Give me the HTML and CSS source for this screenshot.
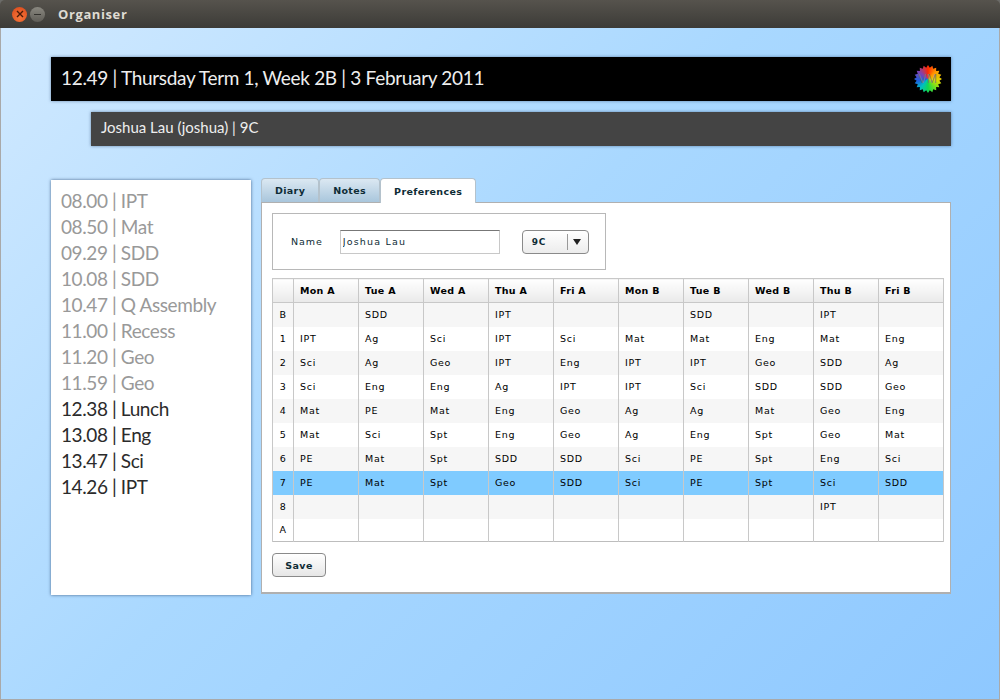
FILE: index.html
```html
<html>
<head>
    <title>Organiser</title>
    <link rel="stylesheet" href="styles.css">
</head>
<body>
    <div id="window">
        <div class="titlebar">
            <div class="winbtn close">
                <svg width="8" height="8" viewBox="0 0 8 8"><path d="M1 1L7 7M7 1L1 7" stroke="#4a1a08" stroke-width="1.4"/></svg>
            </div>
            <div class="winbtn minimise"><span class="dash"></span></div>
            <span class="wintitle">Organiser</span>
        </div>
        <div class="main">
            <div class="clockbar">
                <span>12.49 | Thursday Term 1, Week 2B | 3 February 2011</span>
                <div class="logo"><span>VM</span></div>
            </div>
            <div class="userbar">Joshua Lau (joshua) | 9C</div>
            <div class="content">
                <div class="timeline">
                    <div class="past">08.00 | IPT</div>
                    <div class="past">08.50 | Mat</div>
                    <div class="past">09.29 | SDD</div>
                    <div class="past">10.08 | SDD</div>
                    <div class="past">10.47 | Q Assembly</div>
                    <div class="past">11.00 | Recess</div>
                    <div class="past">11.20 | Geo</div>
                    <div class="past">11.59 | Geo</div>
                    <div>12.38 | Lunch</div>
                    <div>13.08 | Eng</div>
                    <div>13.47 | Sci</div>
                    <div>14.26 | IPT</div>
                </div>
                <div class="tabarea">
                    <div class="tabs">
                        <div class="tab">Diary</div>
                        <div class="tab">Notes</div>
                        <div class="tab active">Preferences</div>
                    </div>
                    <div class="panel">
                        <div class="namebox">
                            <label for="name">Name</label>
                            <input id="name" type="text" value="Joshua Lau">
                            <div class="combo">
                                <span class="combo-value">9C</span>
                                <span class="combo-arrow"></span>
                            </div>
                        </div>
                        <table class="timetable">
                            <thead>
                                <tr><th></th><th>Mon A</th><th>Tue A</th><th>Wed A</th><th>Thu A</th><th>Fri A</th><th>Mon B</th><th>Tue B</th><th>Wed B</th><th>Thu B</th><th>Fri B</th></tr>
                            </thead>
                            <tbody>
                                <tr><td>B</td><td></td><td>SDD</td><td></td><td>IPT</td><td></td><td></td><td>SDD</td><td></td><td>IPT</td><td></td></tr>
                                <tr><td>1</td><td>IPT</td><td>Ag</td><td>Sci</td><td>IPT</td><td>Sci</td><td>Mat</td><td>Mat</td><td>Eng</td><td>Mat</td><td>Eng</td></tr>
                                <tr><td>2</td><td>Sci</td><td>Ag</td><td>Geo</td><td>IPT</td><td>Eng</td><td>IPT</td><td>IPT</td><td>Geo</td><td>SDD</td><td>Ag</td></tr>
                                <tr><td>3</td><td>Sci</td><td>Eng</td><td>Eng</td><td>Ag</td><td>IPT</td><td>IPT</td><td>Sci</td><td>SDD</td><td>SDD</td><td>Geo</td></tr>
                                <tr><td>4</td><td>Mat</td><td>PE</td><td>Mat</td><td>Eng</td><td>Geo</td><td>Ag</td><td>Ag</td><td>Mat</td><td>Geo</td><td>Eng</td></tr>
                                <tr><td>5</td><td>Mat</td><td>Sci</td><td>Spt</td><td>Eng</td><td>Geo</td><td>Ag</td><td>Eng</td><td>Spt</td><td>Geo</td><td>Mat</td></tr>
                                <tr><td>6</td><td>PE</td><td>Mat</td><td>Spt</td><td>SDD</td><td>SDD</td><td>Sci</td><td>PE</td><td>Spt</td><td>Eng</td><td>Sci</td></tr>
                                <tr class="current"><td>7</td><td>PE</td><td>Mat</td><td>Spt</td><td>Geo</td><td>SDD</td><td>Sci</td><td>PE</td><td>Spt</td><td>Sci</td><td>SDD</td></tr>
                                <tr><td>8</td><td></td><td></td><td></td><td></td><td></td><td></td><td></td><td></td><td>IPT</td><td></td></tr>
                                <tr><td>A</td><td></td><td></td><td></td><td></td><td></td><td></td><td></td><td></td><td></td><td></td></tr>
                            </tbody>
                        </table>
                        <button class="save">Save</button>
                    </div>
                </div>
            </div>
        </div>
    </div>
</body>
</html>
```

FILE: styles.css
```css
html, body {
    margin: 0;
    padding: 0;
    width: 1000px;
    height: 700px;
    overflow: hidden;
    background: #6b6b68;
}
#window {
    width: 1000px;
    height: 700px;
    display: flex;
    flex-direction: column;
    border-radius: 5px 5px 0 0;
    overflow: hidden;
}
.titlebar {
    height: 28px;
    flex: none;
    display: flex;
    align-items: center;
    padding-left: 12px;
    box-sizing: border-box;
    background: linear-gradient(#56534d, #3c3b37);
}
.winbtn {
    width: 15px;
    height: 15px;
    border-radius: 50%;
    display: flex;
    align-items: center;
    justify-content: center;
    margin-right: 3px;
}
.close {
    background: radial-gradient(circle at 50% 70%, #f6763a, #d9481a);
}
.minimise {
    background: linear-gradient(#8a8880, #5f5d57);
}
.dash {
    width: 7px;
    height: 1px;
    background: #33322e;
}
.wintitle {
    margin-left: 10px;
    font-family: "Open Sans", sans-serif;
    font-weight: bold;
    font-size: 13px;
    letter-spacing: 0.6px;
    color: #dfdbd2;
}
.main {
    flex: 1;
    box-sizing: border-box;
    padding: 29px 48px 0 50px;
    border: 1px solid #a9a9a9;
    border-width: 0 1px 1px 1px;
    background: linear-gradient(135deg, #d0e9ff 0%, #a9d8ff 45%, #8ec8ff 100%);
}
.clockbar {
    height: 44px;
    box-sizing: border-box;
    background: #000;
    color: #eee;
    display: flex;
    align-items: center;
    justify-content: space-between;
    padding: 0 9px 0 10px;
    font-family: "Lato", sans-serif;
    font-size: 19px;
    letter-spacing: -0.32px;
    box-shadow: 0 0 3px rgba(40, 70, 110, 0.6);
}
.clockbar > span {
    margin-bottom: 4px;
}
.logo {
    width: 28px;
    height: 28px;
    display: flex;
    align-items: center;
    justify-content: center;
    background: conic-gradient(#ff2a00, #ff9500 45deg, #e0d800 100deg, #70e020 140deg, #10d850 180deg, #00c0c0 220deg, #1c60e0 260deg, #8040b0 310deg, #ff2a00);
    clip-path: polygon(50% 0, 56.4% 9.5%, 65.5% 2.4%, 68.6% 13.5%, 79.4% 9.5%, 79% 21%, 90.5% 20.6%, 86.5% 31.4%, 97.6% 34.5%, 90.5% 43.6%, 100% 50%, 90.5% 56.4%, 97.6% 65.5%, 86.5% 68.6%, 90.5% 79.4%, 79% 79%, 79.4% 90.5%, 68.6% 86.5%, 65.5% 97.6%, 56.4% 90.5%, 50% 100%, 43.6% 90.5%, 34.5% 97.6%, 31.4% 86.5%, 20.6% 90.5%, 21% 79%, 9.5% 79.4%, 13.5% 68.6%, 2.4% 65.5%, 9.5% 56.4%, 0 50%, 9.5% 43.6%, 2.4% 34.5%, 13.5% 31.4%, 9.5% 20.6%, 21% 21%, 20.6% 9.5%, 31.4% 13.5%, 34.5% 2.4%, 43.6% 9.5%);
}
.logo span {
    font-family: "Liberation Sans", sans-serif;
    font-size: 12px;
    color: rgba(120, 120, 120, 0.9);
    letter-spacing: 0.5px;
}
.userbar {
    height: 34px;
    line-height: 30px;
    margin: 11px 0 0 40px;
    padding-left: 10px;
    background: #444;
    color: #eee;
    font-family: "Lato", sans-serif;
    font-size: 15px;
    box-shadow: 0 0 3px rgba(40, 70, 110, 0.6);
}
.content {
    display: flex;
    align-items: flex-start;
    margin-top: 34px;
}
.timeline {
    width: 200px;
    height: 415px;
    flex: none;
    box-sizing: border-box;
    background: #fff;
    padding: 8px 0 0 10px;
    font-family: "Lato", sans-serif;
    font-size: 19px;
    letter-spacing: -0.4px;
    line-height: 26px;
    color: #2b2b2b;
    box-shadow: 0 0 3px rgba(40, 70, 110, 0.8);
}
.past {
    color: #999;
}
.tabarea {
    margin: -2px 0 0 10px;
    width: 690px;
    font-family: "DejaVu Sans", sans-serif;
    color: #0e2c36;
}
.tabs {
    display: flex;
    height: 24px;
    align-items: flex-start;
}
.tab {
    height: 24px;
    line-height: 24px;
    box-sizing: border-box;
    padding: 0 13px;
    font-size: 9.5px;
    font-weight: bold;
    letter-spacing: 0.35px;
    border: 1px solid #b4c2cc;
    border-bottom: 0;
    border-radius: 4px 4px 0 0;
    background: linear-gradient(#dbe8f2, #a9c6dc);
}
.tab.active {
    height: 25px;
    line-height: 26px;
    background: #fff;
    position: relative;
}
.panel {
    height: 392px;
    box-sizing: border-box;
    background: #fff;
    border: 1px solid #b0b0b0;
    border-width: 1px 1px 2px 1px;
    padding: 10px 7px 0 10px;
}
.namebox {
    width: 334px;
    height: 57px;
    box-sizing: border-box;
    border: 1px solid #b8b8b8;
    display: flex;
    align-items: center;
    padding-left: 18px;
    font-size: 9.5px;
    letter-spacing: 0.9px;
}
.namebox input {
    width: 160px;
    height: 24px;
    box-sizing: border-box;
    margin: 0 0 0 17px;
    padding: 0 2px;
    border: 1px solid #c8c8c8;
    border-top-color: #777;
    font-family: "DejaVu Sans", sans-serif;
    font-size: 9.5px;
    letter-spacing: 1.2px;
    color: #0e2c36;
    outline: none;
}
.combo {
    margin-left: 22px;
    width: 67px;
    height: 24px;
    box-sizing: border-box;
    border: 1px solid #8a8a8a;
    border-radius: 4px;
    display: flex;
    align-items: center;
    background: linear-gradient(#fff, #ececec);
}
.combo-value {
    width: 45px;
    box-sizing: border-box;
    padding-left: 9px;
    font-weight: bold;
    font-size: 9px;
    border-right: 1px solid #999;
    line-height: 16px;
}
.combo-arrow {
    margin-left: 5px;
    border-left: 4px solid transparent;
    border-right: 4px solid transparent;
    border-top: 6px solid #222;
}
.timetable {
    margin-top: 8px;
    width: 672px;
    table-layout: fixed;
    border-collapse: collapse;
    font-size: 9.5px;
    letter-spacing: 0.7px;
    border: 1px solid #bdbdbd;
}
.timetable th {
    height: 24px;
    box-sizing: border-box;
    padding: 0 0 0 6px;
    text-align: left;
    font-weight: bold;
    letter-spacing: 0.3px;
    border: 1px solid #c8c8c8;
    background: linear-gradient(#fff, #e9e9e9);
}
.timetable th:first-child {
    width: 21px;
}
.timetable td {
    height: 24px;
    box-sizing: border-box;
    padding: 0 0 0 6px;
    border-left: 1px solid #c8c8c8;
    border-right: 1px solid #c8c8c8;
}
.timetable td:first-child {
    padding: 0;
    text-align: center;
}
.timetable tbody tr:nth-child(odd) {
    background: #f6f6f6;
}
.timetable tbody tr.current {
    background: #7fcbff;
}
.timetable tbody tr:last-child td {
    height: 23px;
}
.save {
    display: block;
    margin-top: 11px;
    width: 54px;
    height: 24px;
    border: 1px solid #8a8a8a;
    border-radius: 4px;
    background: linear-gradient(#fff, #e6e6e6);
    font-family: "DejaVu Sans", sans-serif;
    font-size: 9.5px;
    font-weight: bold;
    letter-spacing: 0.4px;
    color: #0e2c36;
}
```
